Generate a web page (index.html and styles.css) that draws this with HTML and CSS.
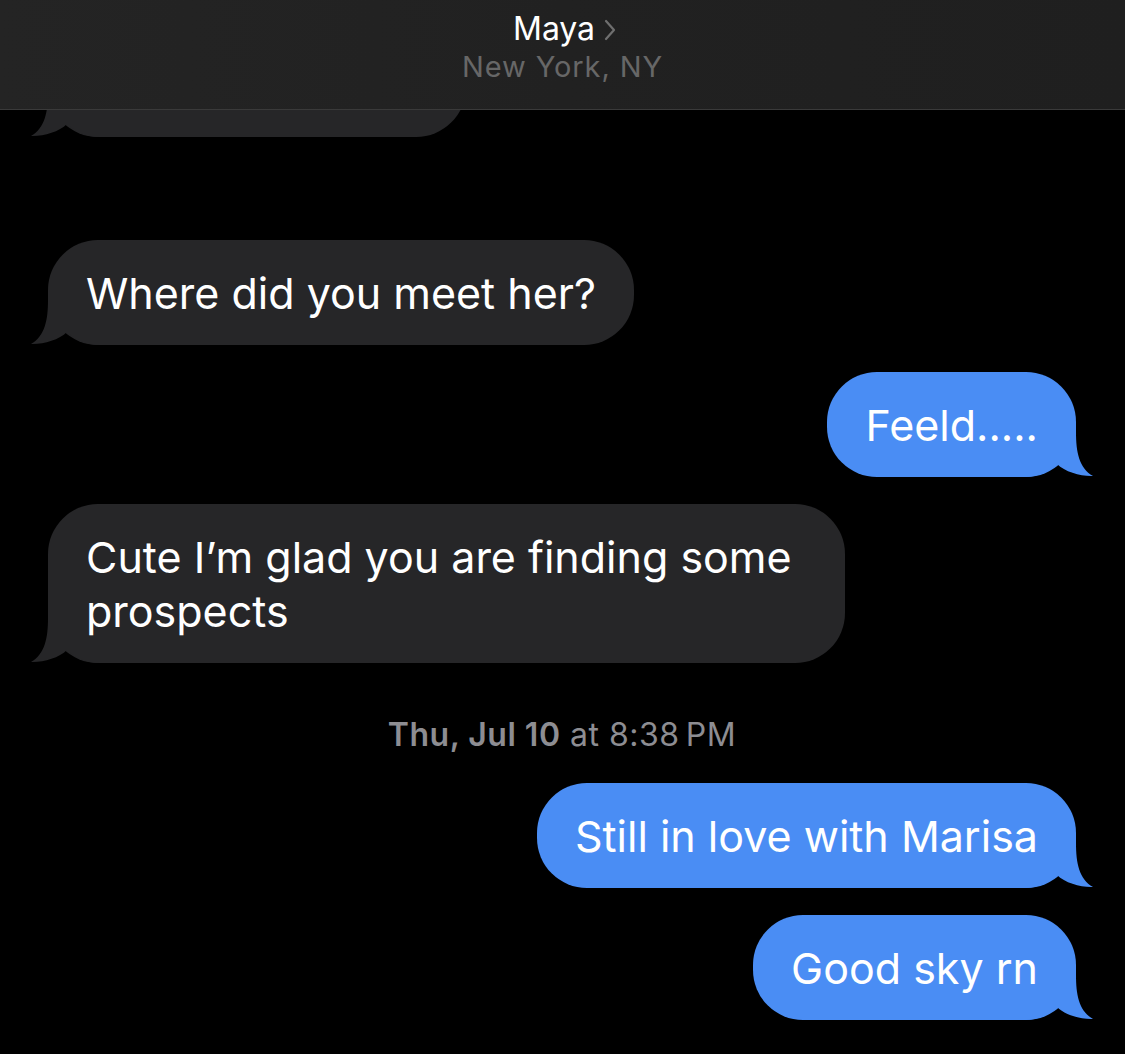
FILE: index.html
```html
<!DOCTYPE html>
<html lang="en">
<head>
<meta charset="utf-8">
<title>Maya</title>
<link rel="stylesheet" href="styles.css">
</head>
<body>
<div class="screen">
  <header class="nav">
    <div class="nav-title">
      <span class="name">Maya</span>
      <svg class="chev" width="12" height="22" viewBox="0 0 12 22"><path d="M2 2 L10 11 L2 20" fill="none" stroke="#6f6f6f" stroke-width="2.2" stroke-linecap="round" stroke-linejoin="round"/></svg>
    </div>
    <div class="nav-sub">New York, NY</div>
  </header>

  <main class="thread">
    <div class="row in">
      <div class="bubble in partial">
        <svg class="tail" width="69" height="55" viewBox="0 0 69 55"><path d="M17 0 L17 10 C17 30 14 46 0 54 C12 54.5 28 50 36 42 C44 49 54 55 69 55 L69 0 Z"/></svg>
      </div>
    </div>

    <div class="row in">
      <div class="bubble in">Where did you meet her?
        <svg class="tail" width="69" height="55" viewBox="0 0 69 55"><path d="M17 0 L17 10 C17 30 14 46 0 54 C12 54.5 28 50 36 42 C44 49 54 55 69 55 L69 0 Z"/></svg>
      </div>
    </div>

    <div class="row out">
      <div class="bubble out">Feeld.....
        <svg class="tail" width="69" height="55" viewBox="0 0 69 55"><path d="M17 0 L17 10 C17 30 14 46 0 54 C12 54.5 28 50 36 42 C44 49 54 55 69 55 L69 0 Z"/></svg>
      </div>
    </div>

    <div class="row in">
      <div class="bubble in">Cute I’m glad you are finding some prospects
        <svg class="tail" width="69" height="55" viewBox="0 0 69 55"><path d="M17 0 L17 10 C17 30 14 46 0 54 C12 54.5 28 50 36 42 C44 49 54 55 69 55 L69 0 Z"/></svg>
      </div>
    </div>

    <div class="stamp"><span class="day">Thu, Jul 10</span> at 8:38&#8239;PM</div>

    <div class="row out">
      <div class="bubble out">Still in love with Marisa
        <svg class="tail" width="69" height="55" viewBox="0 0 69 55"><path d="M17 0 L17 10 C17 30 14 46 0 54 C12 54.5 28 50 36 42 C44 49 54 55 69 55 L69 0 Z"/></svg>
      </div>
    </div>

    <div class="row out">
      <div class="bubble out">Good sky rn
        <svg class="tail" width="69" height="55" viewBox="0 0 69 55"><path d="M17 0 L17 10 C17 30 14 46 0 54 C12 54.5 28 50 36 42 C44 49 54 55 69 55 L69 0 Z"/></svg>
      </div>
    </div>
  </main>
</div>
</body>
</html>
```

FILE: styles.css
```css
* { box-sizing: border-box; }

html, body {
  margin: 0;
  padding: 0;
  background: #000;
}

body {
  font-family: Inter, "Noto Sans", "Liberation Sans", sans-serif;
  color: #fff;
}

.screen {
  position: relative;
  width: 1125px;
  height: 1054px;
  overflow: hidden;
  background: #000;
}

.nav {
  position: absolute;
  top: 0;
  left: 0;
  right: 0;
  height: 110px;
  z-index: 5;
  background: linear-gradient(90deg, #242424 0%, #212121 50%, #1f1f1f 100%);
  border-bottom: 1px solid #3a3a3a;
  display: flex;
  flex-direction: column;
  align-items: center;
  padding-top: 9px;
}

.nav-title {
  display: flex;
  align-items: center;
  gap: 9px;
  height: 40px;
  padding-left: 4px;
}

.name {
  font-size: 32px;
  line-height: 40px;
  color: #fff;
  letter-spacing: -0.1px;
}

.chev { display: block; margin-top: 2px; }

.nav-sub {
  font-size: 29px;
  line-height: 36px;
  color: #676767;
  letter-spacing: 0.9px;
}

.thread {
  display: flex;
  flex-direction: column;
  gap: 27px;
  padding: 32px 49px 0 48px;
}

.row { display: flex; }
.row.in { justify-content: flex-start; }
.row.out { justify-content: flex-end; }

.bubble {
  position: relative;
  isolation: isolate;
  font-size: 43px;
  line-height: 54px;
  padding: 25.5px 38px;
  border-radius: 50px;
  max-width: 797px;
}

.bubble.in { background: #262628; color: #fff; }
.bubble.out { background: #4a8df4; color: #fff; }

.bubble.partial {
  width: 418px;
  height: 105px;
  margin-bottom: 76px;
}

.tail {
  position: absolute;
  bottom: 0;
  z-index: -1;
  display: block;
}

.bubble.in .tail { left: -17px; fill: #262628; }
.bubble.out .tail { right: -17px; fill: #4a8df4; transform: scaleX(-1); }

.stamp {
  text-align: center;
  font-size: 32px;
  line-height: 36px;
  letter-spacing: 0.5px;
  color: #8d8d92;
  margin: 27px 0 3px;
}

.stamp .day { font-weight: 600; }
```
